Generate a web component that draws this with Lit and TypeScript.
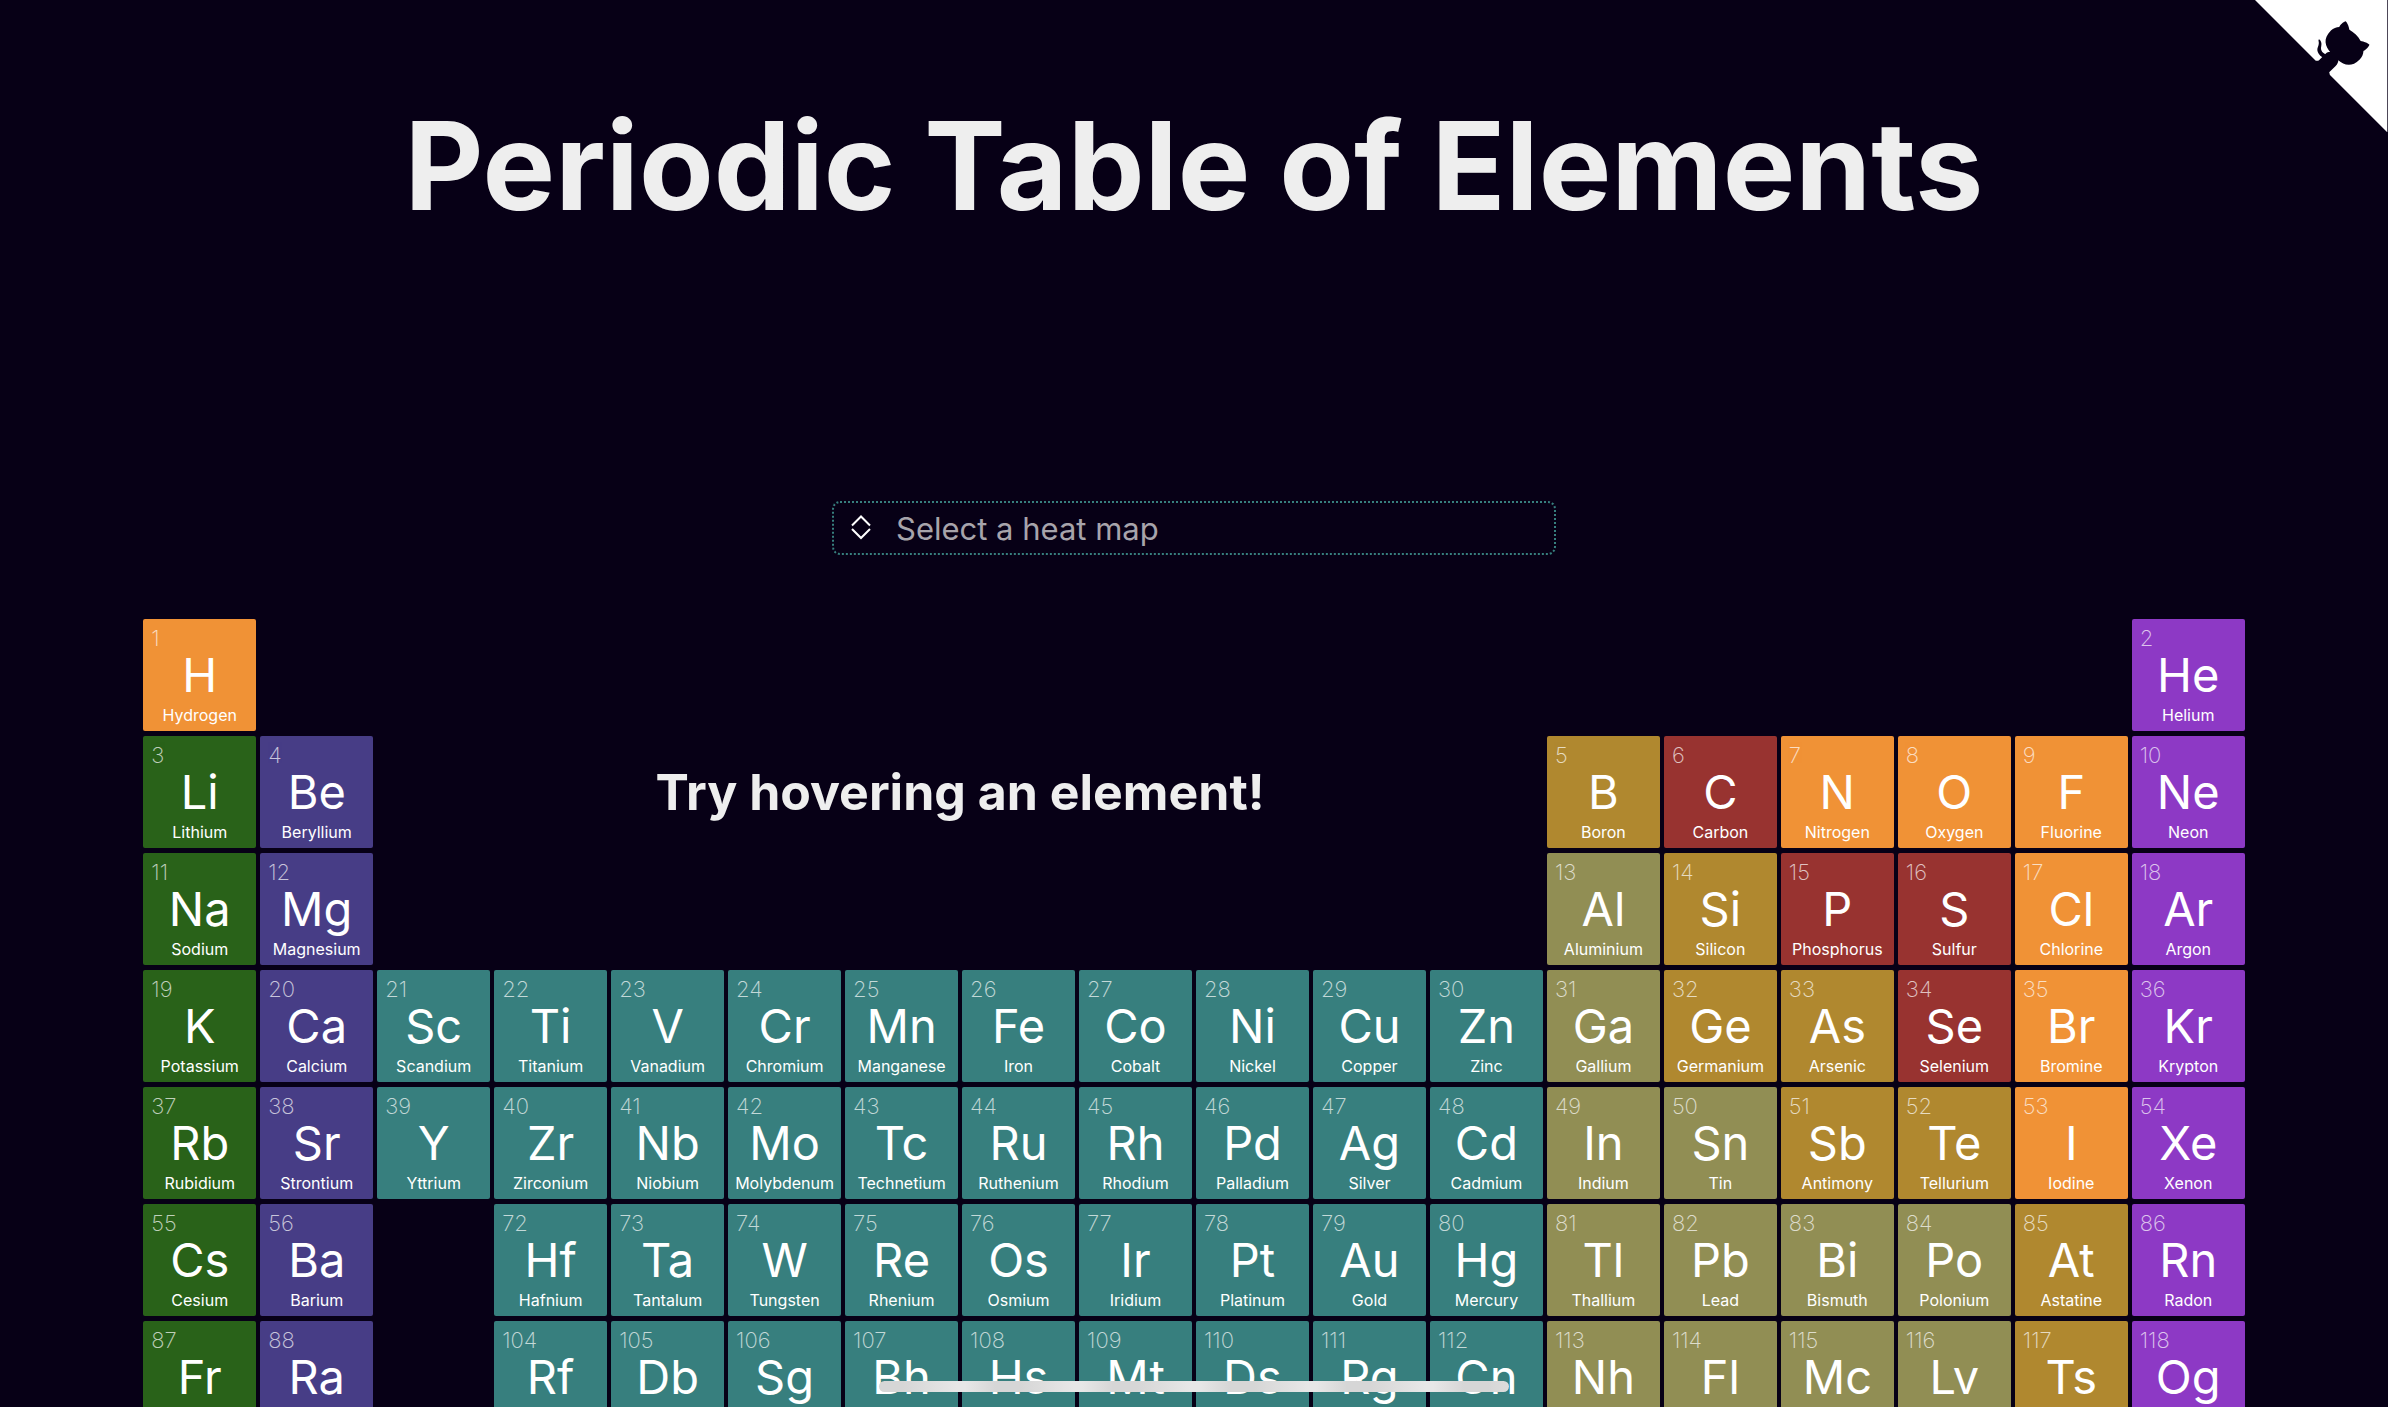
import { LitElement, html, css, svg } from "lit";
import { customElement, property, state } from "lit/decorators.js";
import { classMap } from "lit/directives/class-map.js";

type Kind =
  | "nonmetal"
  | "alkali"
  | "alkaline"
  | "transition"
  | "poor"
  | "metalloid"
  | "polyatomic"
  | "noble";

interface ChemicalElement {
  number: number;
  symbol: string;
  name: string;
  kind: Kind;
}

type Slot = ChemicalElement | null;

const KINDS: Record<string, Kind> = {
  n: "nonmetal",
  a: "alkali",
  e: "alkaline",
  t: "transition",
  p: "poor",
  m: "metalloid",
  y: "polyatomic",
  g: "noble",
};

// One line per period. "-N" leaves N columns empty; other entries are
// number:symbol:name:kind code.
const PERIODS = [
  "1:H:Hydrogen:n -16 2:He:Helium:g",
  "3:Li:Lithium:a 4:Be:Beryllium:e -10 5:B:Boron:m 6:C:Carbon:y 7:N:Nitrogen:n 8:O:Oxygen:n 9:F:Fluorine:n 10:Ne:Neon:g",
  "11:Na:Sodium:a 12:Mg:Magnesium:e -10 13:Al:Aluminium:p 14:Si:Silicon:m 15:P:Phosphorus:y 16:S:Sulfur:y 17:Cl:Chlorine:n 18:Ar:Argon:g",
  "19:K:Potassium:a 20:Ca:Calcium:e 21:Sc:Scandium:t 22:Ti:Titanium:t 23:V:Vanadium:t 24:Cr:Chromium:t 25:Mn:Manganese:t 26:Fe:Iron:t 27:Co:Cobalt:t 28:Ni:Nickel:t 29:Cu:Copper:t 30:Zn:Zinc:t 31:Ga:Gallium:p 32:Ge:Germanium:m 33:As:Arsenic:m 34:Se:Selenium:y 35:Br:Bromine:n 36:Kr:Krypton:g",
  "37:Rb:Rubidium:a 38:Sr:Strontium:e 39:Y:Yttrium:t 40:Zr:Zirconium:t 41:Nb:Niobium:t 42:Mo:Molybdenum:t 43:Tc:Technetium:t 44:Ru:Ruthenium:t 45:Rh:Rhodium:t 46:Pd:Palladium:t 47:Ag:Silver:t 48:Cd:Cadmium:t 49:In:Indium:p 50:Sn:Tin:p 51:Sb:Antimony:m 52:Te:Tellurium:m 53:I:Iodine:n 54:Xe:Xenon:g",
  "55:Cs:Cesium:a 56:Ba:Barium:e -1 72:Hf:Hafnium:t 73:Ta:Tantalum:t 74:W:Tungsten:t 75:Re:Rhenium:t 76:Os:Osmium:t 77:Ir:Iridium:t 78:Pt:Platinum:t 79:Au:Gold:t 80:Hg:Mercury:t 81:Tl:Thallium:p 82:Pb:Lead:p 83:Bi:Bismuth:p 84:Po:Polonium:p 85:At:Astatine:m 86:Rn:Radon:g",
  "87:Fr:Francium:a 88:Ra:Radium:e -1 104:Rf:Rutherfordium:t 105:Db:Dubnium:t 106:Sg:Seaborgium:t 107:Bh:Bohrium:t 108:Hs:Hassium:t 109:Mt:Meitnerium:t 110:Ds:Darmstadtium:t 111:Rg:Roentgenium:t 112:Cn:Copernicium:t 113:Nh:Nihonium:p 114:Fl:Flerovium:p 115:Mc:Moscovium:p 116:Lv:Livermorium:p 117:Ts:Tennessine:m 118:Og:Oganesson:g",
];

const TABLE: Slot[][] = PERIODS.map((line) =>
  line.split(" ").flatMap((entry): Slot[] => {
    if (entry.startsWith("-")) return new Array(Number(entry.slice(1))).fill(null);
    const [number, symbol, name, kind] = entry.split(":");
    return [{ number: Number(number), symbol, name, kind: KINDS[kind] }];
  }),
);

@customElement("element-tile")
export class ElementTile extends LitElement {
  static styles = css`
    :host {
      display: block;
      min-width: 0;
    }
    .tile {
      box-sizing: border-box;
      width: 100%;
      height: 112px;
      margin: 0;
      padding: 8px 0 0;
      border: 0;
      border-radius: 2px;
      display: flex;
      flex-direction: column;
      overflow: hidden;
      color: #fff;
      font-family: Inter, "Liberation Sans", sans-serif;
      text-align: center;
      cursor: pointer;
    }
    .tile:hover,
    .tile:focus-visible {
      filter: brightness(1.2);
    }
    .number {
      padding: 0 0 2px 8px;
      font-size: 22px;
      line-height: 22px;
      font-weight: 200;
      text-align: left;
      opacity: 0.7;
    }
    .symbol {
      font-size: 47px;
      line-height: 48px;
    }
    .name {
      padding-top: 6px;
      font-size: 16px;
      line-height: 20px;
      white-space: nowrap;
    }
    .nonmetal { background: #f09236; }
    .alkali { background: #296219; }
    .alkaline { background: #473d86; }
    .transition { background: #377f7e; }
    .poor { background: #918e54; }
    .metalloid { background: #b0882f; }
    .polyatomic { background: #983330; }
    .noble { background: #8d39c5; }
  `;

  @property({ attribute: false }) element!: ChemicalElement;

  render() {
    const { number, symbol, name, kind } = this.element;
    return html`<button class=${classMap({ tile: true, [kind]: true })} type="button">
      <span class="number">${number}</span>
      <span class="symbol">${symbol}</span>
      <span class="name">${name}</span>
    </button>`;
  }
}

@customElement("heat-map-picker")
export class HeatMapPicker extends LitElement {
  static styles = css`
    :host {
      display: block;
    }
    .picker {
      box-sizing: border-box;
      height: 54px;
      display: flex;
      align-items: center;
      border: 2px dotted #377f7e;
      border-radius: 8px;
    }
    .toggle {
      width: 54px;
      height: 50px;
      padding: 0;
      border: 0;
      background: none;
      color: #fff;
      display: grid;
      place-items: center;
    }
    .chevrons {
      width: 20px;
      height: 26px;
      fill: none;
      stroke: currentColor;
      stroke-width: 2;
    }
    .field {
      flex: 1;
      min-width: 0;
      height: 50px;
      padding: 0 8px;
      border: 0;
      outline: 0;
      background: none;
      color: #eee;
      font: 31px Inter, "Liberation Sans", sans-serif;
    }
    .field::placeholder {
      color: #a7a4ab;
      opacity: 1;
    }
  `;

  render() {
    return html`<div class="picker">
      <button class="toggle" type="button" aria-label="Show heat maps">
        <svg class="chevrons" viewBox="0 0 20 26" aria-hidden="true">
          ${svg`<path d="M1 10.5 10 1.5l9 9M1 14l9 9 9-9" />`}
        </svg>
      </button>
      <input class="field" type="text" role="combobox" aria-expanded="false"
        aria-label="Select a heat map" placeholder="Select a heat map" />
    </div>`;
  }
}

@customElement("app-root")
export class AppRoot extends LitElement {
  static styles = css`
    :host {
      display: block;
      height: 100vh;
      overflow: hidden;
      position: relative;
      background: #070016;
      color: #eee;
      font-family: Inter, "Liberation Sans", sans-serif;
    }
    .page {
      display: flex;
      flex-direction: column;
      padding: 86px 6% 0;
    }
    .title {
      margin: 0;
      font-size: 122px;
      line-height: 160px;
      font-weight: 700;
      text-align: center;
    }
    .picker {
      width: 724px;
      max-width: 100%;
      align-self: center;
      margin: 255px 0 64px;
    }
    .table {
      display: grid;
      grid-template-columns: repeat(18, minmax(0, 1fr));
      gap: 5px 4px;
    }
    .hint {
      grid-area: 1 / 3 / 4 / 13;
      place-self: center;
      margin: 0;
      font-size: 50px;
      line-height: 64px;
      font-weight: 700;
      white-space: nowrap;
    }
    .period {
      display: grid;
      grid-column: 1 / -1;
      grid-template-columns: subgrid;
    }
    .row-1 { grid-row: 1; }
    .row-2 { grid-row: 2; }
    .row-3 { grid-row: 3; }
    .row-4 { grid-row: 4; }
    .row-5 { grid-row: 5; }
    .row-6 { grid-row: 6; }
    .row-7 { grid-row: 7; }
    .after-1 { grid-column: 4; }
    .after-10 { grid-column: 13; }
    .after-16 { grid-column: 18; }
    .corner {
      position: absolute;
      top: 0;
      right: 0;
      border-right: 1px solid #4d4858;
      color: #070016;
    }
    .octocat {
      display: block;
      width: 132px;
      height: 132px;
    }
    .corner-fill {
      fill: #fff;
    }
    .cat {
      fill: currentColor;
    }
    .home-bar {
      position: absolute;
      left: 50%;
      bottom: 15px;
      width: 630px;
      height: 11px;
      margin-left: -315px;
      border-radius: 6px;
      background: repeating-linear-gradient(90deg, #d6d6d6 0, #d6d6d6 24px, #e7e7e7 78px, #e7e7e7 86px, #d6d6d6 117px);
    }
  `;

  @state() private hovered: ChemicalElement | null = null;

  private renderPeriod(row: Slot[], index: number) {
    let gap = 0;
    const tiles = row.map((slot) => {
      if (!slot) {
        gap += 1;
        return null;
      }
      const classes = { [`after-${gap}`]: gap > 0 };
      gap = 0;
      return html`<element-tile
        class=${classMap(classes)}
        .element=${slot}
        @mouseenter=${() => (this.hovered = slot)}
      ></element-tile>`;
    });
    return html`<div class=${classMap({ period: true, [`row-${index + 1}`]: true })}>${tiles}</div>`;
  }

  render() {
    return html`
      <main class="page">
        <h1 class="title">Periodic Table of Elements</h1>
        <heat-map-picker class="picker"></heat-map-picker>
        <section class="table" aria-label="Elements">
          <h2 class="hint">${this.hovered ? this.hovered.name : "Try hovering an element!"}</h2>
          ${TABLE.map((row, index) => this.renderPeriod(row, index))}
        </section>
      </main>
      <a class="corner" href="#source" aria-label="View source on GitHub">
        <svg class="octocat" viewBox="0 0 250 250" aria-hidden="true">
          <path class="corner-fill" d="M0,0 L115,115 L130,115 L142,142 L250,250 L250,0 Z" />
          <path class="cat" d="M128.3,109.0 C113.8,99.7 119.0,89.6 119.0,89.6 C122.0,82.7 120.5,78.6 120.5,78.6 C119.2,72.0 123.4,76.3 123.4,76.3 C127.3,80.9 125.5,87.3 125.5,87.3 C122.9,97.6 130.6,101.9 134.4,103.2" />
          <path class="cat" d="M115.0,115.0 C114.9,115.1 118.7,116.5 119.8,115.4 L133.7,101.6 C136.9,99.2 139.9,98.4 142.2,98.6 C133.8,88.0 127.5,74.4 143.8,58.0 C148.5,53.4 154.0,51.2 159.7,51.0 C160.3,49.4 163.2,43.6 171.4,40.1 C171.4,40.1 176.1,42.5 178.8,56.2 C183.1,58.6 187.2,61.8 190.9,65.4 C194.5,69.0 197.7,73.2 200.1,77.6 C213.8,80.2 216.9,84.9 216.9,84.9 C212.7,93.1 206.9,96.0 205.4,96.6 C205.1,102.4 203.0,107.8 198.3,112.5 C181.9,128.9 168.3,122.5 157.7,114.1 C157.9,116.9 156.7,120.9 152.7,124.9 L141.0,136.5 C139.8,137.7 141.6,141.9 141.8,141.8 Z" />
        </svg>
      </a>
      <div class="home-bar"></div>
    `;
  }
}
